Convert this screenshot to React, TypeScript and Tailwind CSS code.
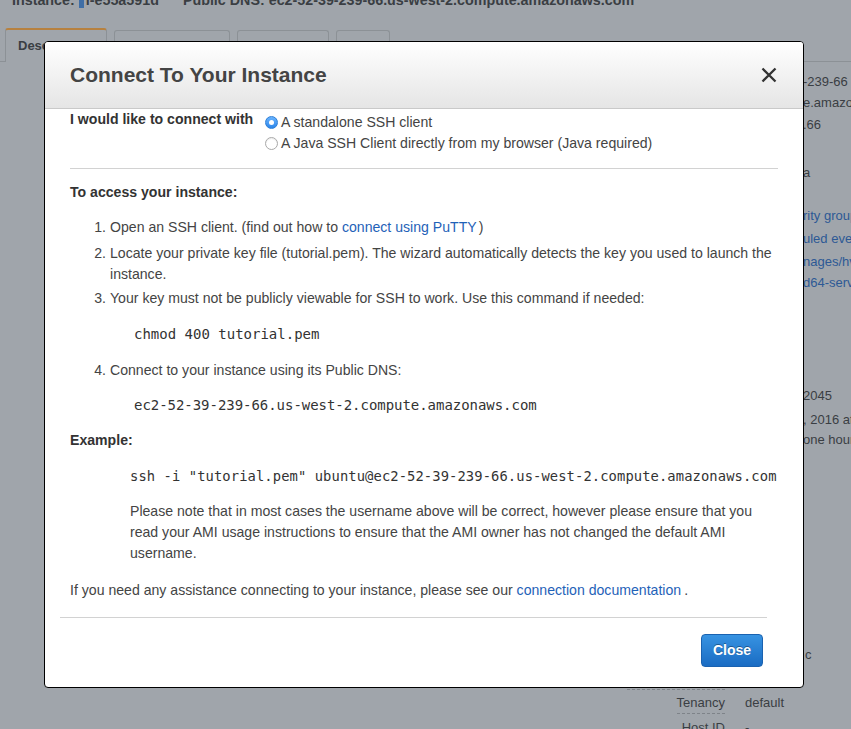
import React from "react";

function Radio({ checked }: { checked: boolean }) {
  return checked ? (
    <span className="w-[13px] h-[13px] shrink-0 rounded-full bg-linear-to-b from-[#69b4ff] to-[#2a86ea] border border-[#2f7fd6] flex items-center justify-center">
      <span className="w-[5px] h-[5px] rounded-full bg-white" />
    </span>
  ) : (
    <span className="w-[13px] h-[13px] shrink-0 rounded-full bg-white border border-[#a9a9a9] shadow-[inset_0_1px_1px_rgba(0,0,0,0.08)]" />
  );
}

function Step({ n, children }: { n: string; children: React.ReactNode }) {
  return (
    <li className="flex">
      <span className="w-[36px] shrink-0 text-right">{n}</span>
      <div className="ml-[4px] flex-1">{children}</div>
    </li>
  );
}

export default function App() {
  const mono = "font-['DejaVu_Sans_Mono',monospace] text-[#333]";
  return (
    <div className="relative w-[851px] h-[729px] overflow-hidden bg-[#a0a5ab] font-['Liberation_Sans',Arial,sans-serif] text-[#3a3e43]">
      {/* Background page (dimmed) */}
      <div className="-mt-[10px] h-[20px] flex items-center pl-[12px] text-[14.3px] font-bold leading-[20px] whitespace-nowrap">
        <span>Instance:</span>
        <span className="ml-[4px] inline-block w-[5px] h-[15px] bg-[#3f6ea6]" />
        <span className="ml-[2px]">i-e55a591d</span>
        <span className="ml-[24px]">Public DNS: ec2-52-39-239-66.us-west-2.compute.amazonaws.com</span>
      </div>

      <div className="mt-[18px] h-[34px] flex items-end gap-[7px] pl-[5px] border-b border-[#8c9196] text-[13px] font-bold">
        <div className="w-[102px] h-[34px] -mb-px bg-[#a0a5ab] border-x border-[#8c9196] border-t-2 border-t-[#b7813f] rounded-t-[3px] flex items-center pl-[12px]">
          Description
        </div>
        <div className="w-[116px] h-[31px] border border-b-0 border-[#8c9196] rounded-t-[3px] flex items-center pl-[12px]">
          Status Checks
        </div>
        <div className="w-[92px] h-[31px] border border-b-0 border-[#8c9196] rounded-t-[3px] flex items-center pl-[12px]">
          Monitoring
        </div>
        <div className="w-[54px] h-[31px] border border-b-0 border-[#8c9196] rounded-t-[3px] flex items-center pl-[12px]">
          Tags
        </div>
      </div>

      <div className="ml-[803px] text-[13px] leading-[20px] whitespace-nowrap">
        <div className="mt-[10px]">-239-66</div>
        <div className="mt-[1px]">e.amazonaws.com</div>
        <div className="mt-[2px]">.66</div>
        <div className="mt-[28px]">a</div>
        <div className="mt-[23px] text-[#2d5995]">rity groups</div>
        <div className="mt-[3px] text-[#2d5995]">uled events</div>
        <div className="mt-[3px] text-[#2d5995]">nages/hvm-ssd/ubuntu</div>
        <div className="mt-[1px] text-[#2d5995]">d64-server-2016</div>
        <div className="mt-[93px]">2045</div>
        <div className="mt-[4px]">, 2016 at 12:52</div>
        <div>one hour)</div>
      </div>

      <div className="mt-[195px] text-[13px] leading-[20px] whitespace-nowrap">
        <div className="flex h-[24px]">
          <div className="w-[725px]" />
          <div className="ml-[80px]">c</div>
        </div>
        <div className="flex h-[24px]">
          <div className="w-[725px] flex justify-end">
            <span className="inline-block h-[21px] border-b border-dashed border-[#7e8389]">Placement group</span>
          </div>
        </div>
        <div className="flex h-[25px]">
          <div className="w-[725px] flex justify-end">
            <span className="inline-block h-[21px] border-b border-dashed border-[#7e8389]">Tenancy</span>
          </div>
          <div className="ml-[20px]">default</div>
        </div>
        <div className="flex h-[24px]">
          <div className="w-[725px] flex justify-end">
            <span className="inline-block h-[21px] border-b border-dashed border-[#7e8389]">Host ID</span>
          </div>
          <div className="ml-[20px]">-</div>
        </div>
      </div>

      {/* Modal dialog (overlay) */}
      <div className="absolute left-[44px] top-[41px] w-[760px] h-[647px] bg-white border border-black rounded-[4px] overflow-hidden text-[#444]">
        <div className="h-[67px] flex items-center pl-[25px] pr-[26px] pb-[1px] border-b border-[#c9c9c9] bg-linear-to-b from-white to-[#e5e5e5]">
          <h1 className="text-[21px] font-bold text-[#444] leading-none">Connect To Your Instance</h1>
          <svg className="ml-auto" width="16" height="16" viewBox="0 0 16 16">
            <path d="M1.5 1.5 L14.5 14.5 M14.5 1.5 L1.5 14.5" stroke="#333" strokeWidth="2.3" strokeLinecap="butt" />
          </svg>
        </div>

        <div className="px-[25px] text-[14.1px] leading-[21px]">
          <div className="flex">
            <div className="w-[195px] font-bold text-[#333]">I would like to connect with</div>
            <div className="mt-[3px]">
              <div className="flex items-center h-[21px]">
                <Radio checked />
                <span className="ml-[3px]">A standalone SSH client</span>
              </div>
              <div className="flex items-center h-[21px]">
                <Radio checked={false} />
                <span className="ml-[3px]">A Java SSH Client directly from my browser (Java required)</span>
              </div>
            </div>
          </div>

          <div className="mt-[14px] h-px bg-[#d2d2d2]" />

          <div className="mt-[13px] font-bold text-[#333]">To access your instance:</div>

          <ol className="mt-[14px]">
            <Step n="1.">
              Open an SSH client. (find out how to{" "}
              <span className="text-[#1f62b8] mr-[2px]">connect using PuTTY</span>)
            </Step>
            <div className="mt-[5px]">
              <Step n="2.">
                Locate your private key file (tutorial.pem). The wizard automatically detects the key you used to launch the instance.
              </Step>
            </div>
            <div className="mt-[3px]">
              <Step n="3.">
                Your key must not be publicly viewable for SSH to work. Use this command if needed:
                <div className={`mt-[15px] ml-[24px] text-[14px] ${mono}`}>chmod 400 tutorial.pem</div>
              </Step>
            </div>
            <div className="mt-[15px]">
              <Step n="4.">
                Connect to your instance using its Public DNS:
                <div className={`mt-[14px] ml-[24px] text-[14px] tracking-[-0.04px] ${mono}`}>ec2-52-39-239-66.us-west-2.compute.amazonaws.com</div>
              </Step>
            </div>
          </ol>

          <div className="mt-[14px] font-bold text-[#333]">Example:</div>

          <div className={`mt-[15px] ml-[60px] whitespace-nowrap text-[13.8px] tracking-[0.09px] ${mono}`}>
            ssh -i "tutorial.pem" ubuntu@ec2-52-39-239-66.us-west-2.compute.amazonaws.com
          </div>

          <p className="mt-[14px] ml-[60px] w-[647px]">
            Please note that in most cases the username above will be correct, however please ensure that you read your AMI usage instructions to ensure that the AMI owner has not changed the default AMI username.
          </p>

          <p className="mt-[16px]">
            If you need any assistance connecting to your instance, please see our{" "}
            <span className="text-[#1f62b8] mr-[3px]">connection documentation</span>.
          </p>
        </div>

        <div className="mt-[16px] ml-[15px] w-[707px] h-px bg-[#d2d2d2]" />

        <div className="mt-[16px] ml-[15px] w-[707px] pr-[4px] flex justify-end">
          <button className="h-[33px] px-[11px] rounded-[4px] border border-[#1a62b0] bg-linear-to-b from-[#3793e2] to-[#1a6cc3] text-white text-[14px] font-bold [text-shadow:0_-1px_0_rgba(0,0,0,0.35)]">
            Close
          </button>
        </div>
      </div>
    </div>
  );
}
